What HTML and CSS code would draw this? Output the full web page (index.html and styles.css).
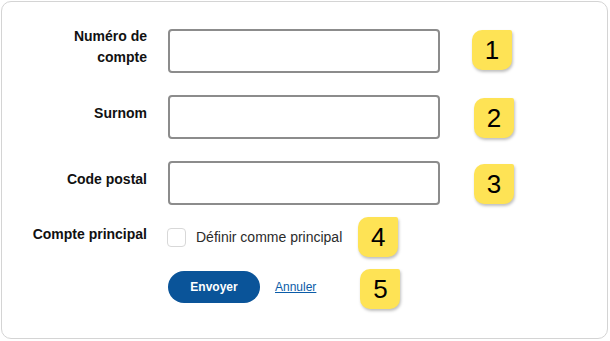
FILE: index.html
```html
<!DOCTYPE html>
<html lang="fr">
<head>
<meta charset="utf-8">
<title>Compte</title>
<link rel="stylesheet" href="styles.css">
</head>
<body>
<form class="card">
  <div class="row">
    <label class="label" for="num">Numéro de<br>compte</label>
    <input class="field" id="num" type="text">
    <span class="badge badge-field1">1</span>
  </div>
  <div class="row">
    <label class="label" for="sur">Surnom</label>
    <input class="field" id="sur" type="text">
    <span class="badge badge-field">2</span>
  </div>
  <div class="row">
    <label class="label" for="cp">Code postal</label>
    <input class="field" id="cp" type="text">
    <span class="badge badge-field">3</span>
  </div>
  <div class="row row-short">
    <span class="label label-short">Compte principal</span>
    <span class="check"></span>
    <span class="check-text">Définir comme principal</span>
    <span class="badge badge-check">4</span>
  </div>
  <div class="row row-short">
    <span class="label"></span>
    <div class="actions">
      <button class="btn" type="button">Envoyer</button>
      <a class="cancel" href="#">Annuler</a>
    </div>
    <span class="badge badge-actions">5</span>
  </div>
</form>
</body>
</html>
```
FILE: styles.css
```css
html, body {
  margin: 0;
  padding: 0;
  background: #ffffff;
}
body {
  font-family: "Liberation Sans", Arial, sans-serif;
  color: #111111;
}
.card {
  box-sizing: border-box;
  margin: 1px;
  width: 607px;
  height: 338px;
  border: 1px solid #d4d4d4;
  border-radius: 10px;
  padding-top: 27px;
  display: flex;
  flex-direction: column;
}
.row {
  display: flex;
  align-items: center;
  height: 44px;
  margin-bottom: 22px;
}
.row-short {
  height: 40px;
  margin-bottom: 12px;
}
.row:nth-child(3) {
  margin-bottom: 12px;
}
.label {
  box-sizing: border-box;
  width: 145px;
  flex: none;
  text-align: right;
  font-weight: bold;
  font-size: 14px;
  line-height: 21px;
  padding-bottom: 8px;
  margin-right: 21px;
  color: #111111;
}
.label-short {
  padding-bottom: 5px;
  margin-right: 20px;
}
.field {
  box-sizing: border-box;
  width: 272px;
  height: 44px;
  border: 2px solid #8c8c8c;
  border-radius: 4px;
  background: #ffffff;
  margin: 0;
  padding: 0 8px;
  font: inherit;
}
.badge {
  box-sizing: border-box;
  width: 40px;
  height: 40px;
  flex: none;
  background: #fee355;
  border-radius: 10px 2px 10px 10px;
  box-shadow: 1px 2px 3px rgba(0, 0, 0, 0.25);
  display: flex;
  align-items: center;
  justify-content: center;
  font-size: 26px;
  line-height: 1;
  color: #000000;
}
.badge-field1 {
  margin-left: 32px;
  margin-bottom: 3px;
}
.badge-field {
  margin-left: 34px;
  margin-top: 2px;
}
.check {
  box-sizing: border-box;
  width: 19px;
  height: 19px;
  flex: none;
  border: 1px solid #d8d8d8;
  border-radius: 4px;
  background: #ffffff;
  margin-right: 10px;
}
.check-text {
  font-size: 14px;
  color: #2b2b2b;
  margin-right: 16px;
}
.actions {
  display: flex;
  align-items: center;
  margin-bottom: 4px;
}
.btn {
  box-sizing: border-box;
  width: 92px;
  height: 32px;
  border: none;
  border-radius: 16px;
  background: #0a5499;
  color: #ffffff;
  font-family: "Liberation Sans", Arial, sans-serif;
  font-weight: bold;
  font-size: 12px;
  padding: 0;
  margin: 0;
}
.cancel {
  font-size: 12px;
  color: #0b5ca8;
  text-decoration: underline;
  margin-left: 15px;
}
.badge-actions {
  margin-left: 44px;
}
```
